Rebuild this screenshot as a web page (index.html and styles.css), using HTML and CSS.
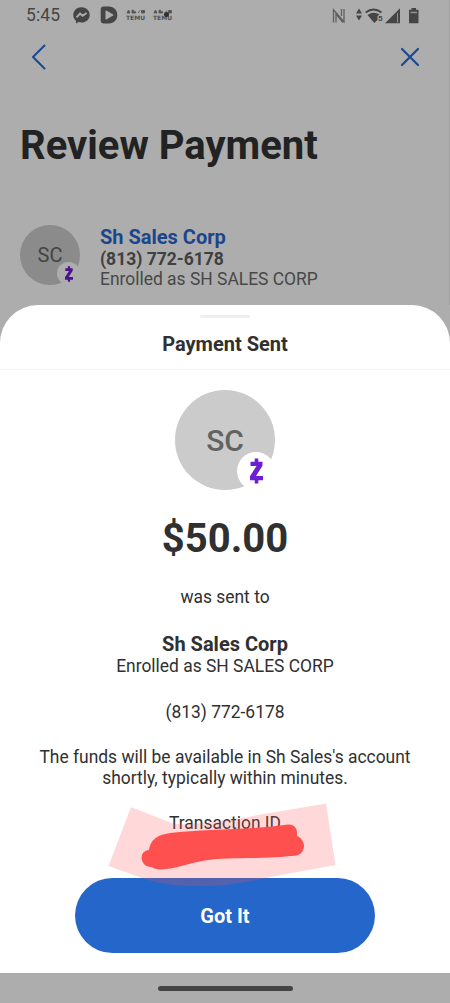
FILE: index.html
```html
<!DOCTYPE html>
<html lang="en">
<head>
<meta charset="utf-8">
<title>Payment Sent</title>
<link rel="stylesheet" href="styles.css">
</head>
<body>
<div class="phone">
  <header class="page">
    <div class="status">
      <span class="clock">5:45</span>
      <svg class="ic messenger" width="17" height="17" viewBox="0 0 17 17"><path d="M8.500.3C3.700.3.300 3.700.300 8c0 2.400 1 4.300 2.600 5.700V16.600l2.700-1.500c.9.3 1.900.4 2.900.4 4.700 0 8.200-3.300 8.200-7.600S13.200.3 8.500.3z" fill="#454545"/><path d="M3.500 10.300 7 6.500l2.600 2.300 4-2.800" fill="none" stroke="#adadad" stroke-width="1.900"/></svg>
      <svg class="ic play" width="18" height="18" viewBox="0 0 18 18"><path d="M3.500.5H9c5 0 8.300 3.600 8.300 8.500S14 17.500 9 17.500H4A3.300 3.300 0 0 1 .7 14.200V3.500a3 3 0 0 1 2.800-3z" fill="#454545"/><path d="M5.500 5v8q0 .8.800.4l6.800-3.800q.7-.6 0-1.100L6.300 4.600q-.8-.4-.8.400z" fill="#adadad"/></svg>
      <span class="temu"><svg width="20" height="5" viewBox="0 0 20 5"><path d="M1 4 2.500 1 4 4zM6 1.200h1.700v1.600h2V4H6zM12 4l2-2.500M15.500 1.500h3V4h-3z" fill="#555" stroke="#555" stroke-width=".9"/></svg><span class="temu-word">TEMU</span></span>
      <span class="temu second"><svg width="20" height="5" viewBox="0 0 20 5"><path d="M1 4 2.500 1 4 4zM6 1.200h1.700v1.600h2V4H6zM12 4l2-2.500M15.500 1.500h3V4h-3z" fill="#555" stroke="#555" stroke-width=".9"/></svg><span class="temu-word">TEMU</span><i class="dot"></i></span>
      <svg class="system" width="90" height="18" viewBox="330 6 90 18">
        <path d="M333.500 21.500V8.800l10.500 12V8M336 21.500V13l7 8.500M341.500 8v7" fill="none" stroke="#606060" stroke-width="1.300"/>
        <path d="M356 12.500 359 7.500l3 5zM356 14.500h6l-3 5z" fill="#454545"/>
        <path d="M365.700 11.500Q373.500 5.500 381.500 11.500" fill="none" stroke="#454545" stroke-width="1.900"/>
        <path d="M367.500 14Q373.500 9.800 379.500 13.500L377.500 15v4l-3.200 3z" fill="#454545"/>
        <text x="378" y="20.200" class="band">5</text>
        <path d="M385 22.300 400 7.300v15z" fill="#454545"/><path d="M397.500 12v9.500" stroke="#adadad" stroke-width=".7"/>
        <path d="M411.500 7h4.500v1.700h2.500v13.600h-9.500V8.700h2.500z" fill="#454545"/><path d="M410.500 11.500h6.500" stroke="#909090" stroke-width="1.600"/>
      </svg>
    </div>
    <nav class="nav">
      <svg width="16" height="28" viewBox="0 0 16 28"><path d="M13.500 2.500 2 14l11.500 11.500" fill="none" stroke="#174a94" stroke-width="2" stroke-linecap="round" stroke-linejoin="round"/></svg>
      <svg width="20" height="20" viewBox="0 0 20 20"><path d="M2 2l16 16M18 2 2 18" fill="none" stroke="#174a94" stroke-width="2.200" stroke-linecap="round"/></svg>
    </nav>
    <h1 class="title">Review Payment</h1>
    <section class="payee">
      <div class="avatar small">SC<span class="badge"><svg class="zelle" viewBox="0 0 13 26"><path d="M4.700.5h3.600v3.200h4.200v4L6 18h7v4.300H8.300v3.200H4.700v-3.200H0v-4L6.500 8H.5V3.700h4.200z"/></svg></span></div>
      <div class="payee-text">
        <div class="payee-name">Sh Sales Corp</div>
        <div class="payee-phone">(813) 772-6178</div>
        <div class="payee-enrolled">Enrolled as SH SALES CORP</div>
      </div>
    </section>
  </header>
  <main class="sheet">
    <div class="sheet-head"><div class="handle"></div><h2 class="sheet-title">Payment Sent</h2></div>
    <div class="avatar large">SC<span class="badge"><svg class="zelle" viewBox="0 0 13 26"><path d="M4.700.5h3.600v3.200h4.200v4L6 18h7v4.300H8.300v3.200H4.700v-3.200H0v-4L6.500 8H.5V3.700h4.200z"/></svg></span></div>
    <div class="amount">$50.00</div>
    <p class="line sent">was sent to</p>
    <p class="recipient">Sh Sales Corp</p>
    <p class="line enrolled">Enrolled as SH SALES CORP</p>
    <p class="line phone-number">(813) 772-6178</p>
    <p class="line funds">The funds will be available in Sh Sales's account<br>shortly, typically within minutes.</p>
    <p class="line transaction">Transaction ID</p>
    <button class="done">Got It</button>
    <svg class="redaction" width="230" height="84" viewBox="107 803 230 84"><path d="M131 807L169 822Q176 825 190 824Q230 821 258 815L326 803.500L335.500 865L270 877Q230 887 190 886Q162 885 145 879L108.500 866z" fill="#ff5050" fill-opacity=".22"/><path d="M149 850C150 840 157 835 170 833C205 829 252 830 288 824.500Q296 824 297 832L297 836C304 839 306 847 302 852C300 855 296 856 290 856C256 860 228 856 202 861C186 864 174 869 161 869.500Q154 869 152 867C142 868 139 856 144 852Q146 850 149 850z" fill="#ff5050"/></svg>
  </main>
  <footer class="gesture"><div class="pill"></div></footer>
</div>
</body>
</html>
```
FILE: styles.css
```css
* { box-sizing: border-box; }
body { margin: 0; font-family: Roboto, sans-serif; color: #303030; background: #adadad; }
h1, h2, p { margin: 0; font-weight: inherit; }
svg { display: block; flex: none; }
.phone { width: 450px; height: 1003px; display: flex; flex-direction: column; background: #adadad; overflow: hidden; }
.page { height: 305px; flex: none; border-right: 1px solid #a0a0a0; }
.status { display: flex; height: 31px; align-items: center; padding-left: 26px; }
.clock { font-size: 17.500px; letter-spacing: .1px; color: #454545; width: 47px; margin-top: -1px; }
.messenger { margin-top: -1px; }
.play { margin: -1px 0 0 10px; }
.temu { display: flex; flex-direction: column; width: 20px; margin: -2px 0 0 8px; position: relative; }
.temu.second { margin-left: 7px; }
.temu-word { font: 700 6px/7px "DejaVu Sans", sans-serif; color: #505050; }
.dot { position: absolute; left: 11px; top: 3px; width: 5px; height: 5px; border-radius: 50%; background: #303030; }
.system { margin: 0 29px 0 auto; }
.band { font-size: 8px; font-weight: 700; fill: #454545; }
.nav { height: 52px; display: flex; justify-content: space-between; align-items: center; padding: 0 29px 0 31px; }
.title { font-size: 40px; line-height: 48px; font-weight: 700; padding-left: 20px; margin-top: 39px; color: #222; white-space: nowrap; }
.payee { display: flex; margin: 55px 0 0 20px; gap: 20px; }
.avatar { position: relative; border-radius: 50%; display: flex; align-items: center; justify-content: center; flex: none; }
.small { width: 60px; height: 60px; background: #8b8b8b; color: #444; font-size: 20px; }
.badge { position: absolute; border-radius: 50%; display: flex; align-items: center; justify-content: center; }
.small .badge { width: 23px; height: 23px; left: 37px; top: 37px; background: #adadad; }
.zelle { fill: #6d1ed4; width: 13px; height: 26px; }
.small .zelle { width: 8px; height: 16px; fill: #4b118f; }
.payee-text { padding-top: 1px; white-space: nowrap; }
.payee-name { font-size: 20px; line-height: 23px; font-weight: 700; color: #1b468c; }
.payee-phone { font-size: 17.500px; line-height: 20px; font-weight: 700; color: #404040; }
.payee-enrolled { font-size: 17.450px; line-height: 20px; color: #484848; }
.sheet { position: relative; height: 668px; flex: none; background: #fff; border-radius: 38px 38px 0 0; display: flex; flex-direction: column; align-items: center; text-align: center; }
.sheet-head { width: 100%; height: 65px; border-bottom: 1px solid #f4f4f4; display: flex; flex-direction: column; align-items: center; padding-top: 10px; }
.handle { width: 50px; height: 3px; background: #efefef; border-radius: 2px; }
.sheet-title { font-size: 20px; line-height: 24px; font-weight: 700; margin-top: 14px; }
.large { width: 100px; height: 100px; margin-top: 20px; background: #cbcbcb; color: #626262; font-size: 30px; font-weight: 500; }
.large .badge { width: 38px; height: 38px; left: 62px; top: 62px; background: #fff; }
.amount { font-size: 40px; line-height: 48px; margin-top: 25px; font-weight: 700; }
.line { font-size: 17.430px; line-height: 21px; white-space: nowrap; }
.sent { margin-top: 24px; }
.recipient { font-size: 20px; line-height: 24px; font-weight: 700; margin-top: 24px; }
.phone-number { margin-top: 25px; }
.funds { margin-top: 24px; }
.transaction { margin-top: 24px; }
.done { width: 300px; height: 75px; border: 0; border-radius: 38px; background: #2566ca; color: #fff; font: 700 20px Roboto, sans-serif; position: absolute; top: 573px; left: 75px; }
.redaction { position: absolute; left: 107px; top: 498px; }
.gesture { height: 30px; display: flex; align-items: center; justify-content: center; }
.pill { width: 135px; height: 5px; border-radius: 3px; background: #444; }
```
